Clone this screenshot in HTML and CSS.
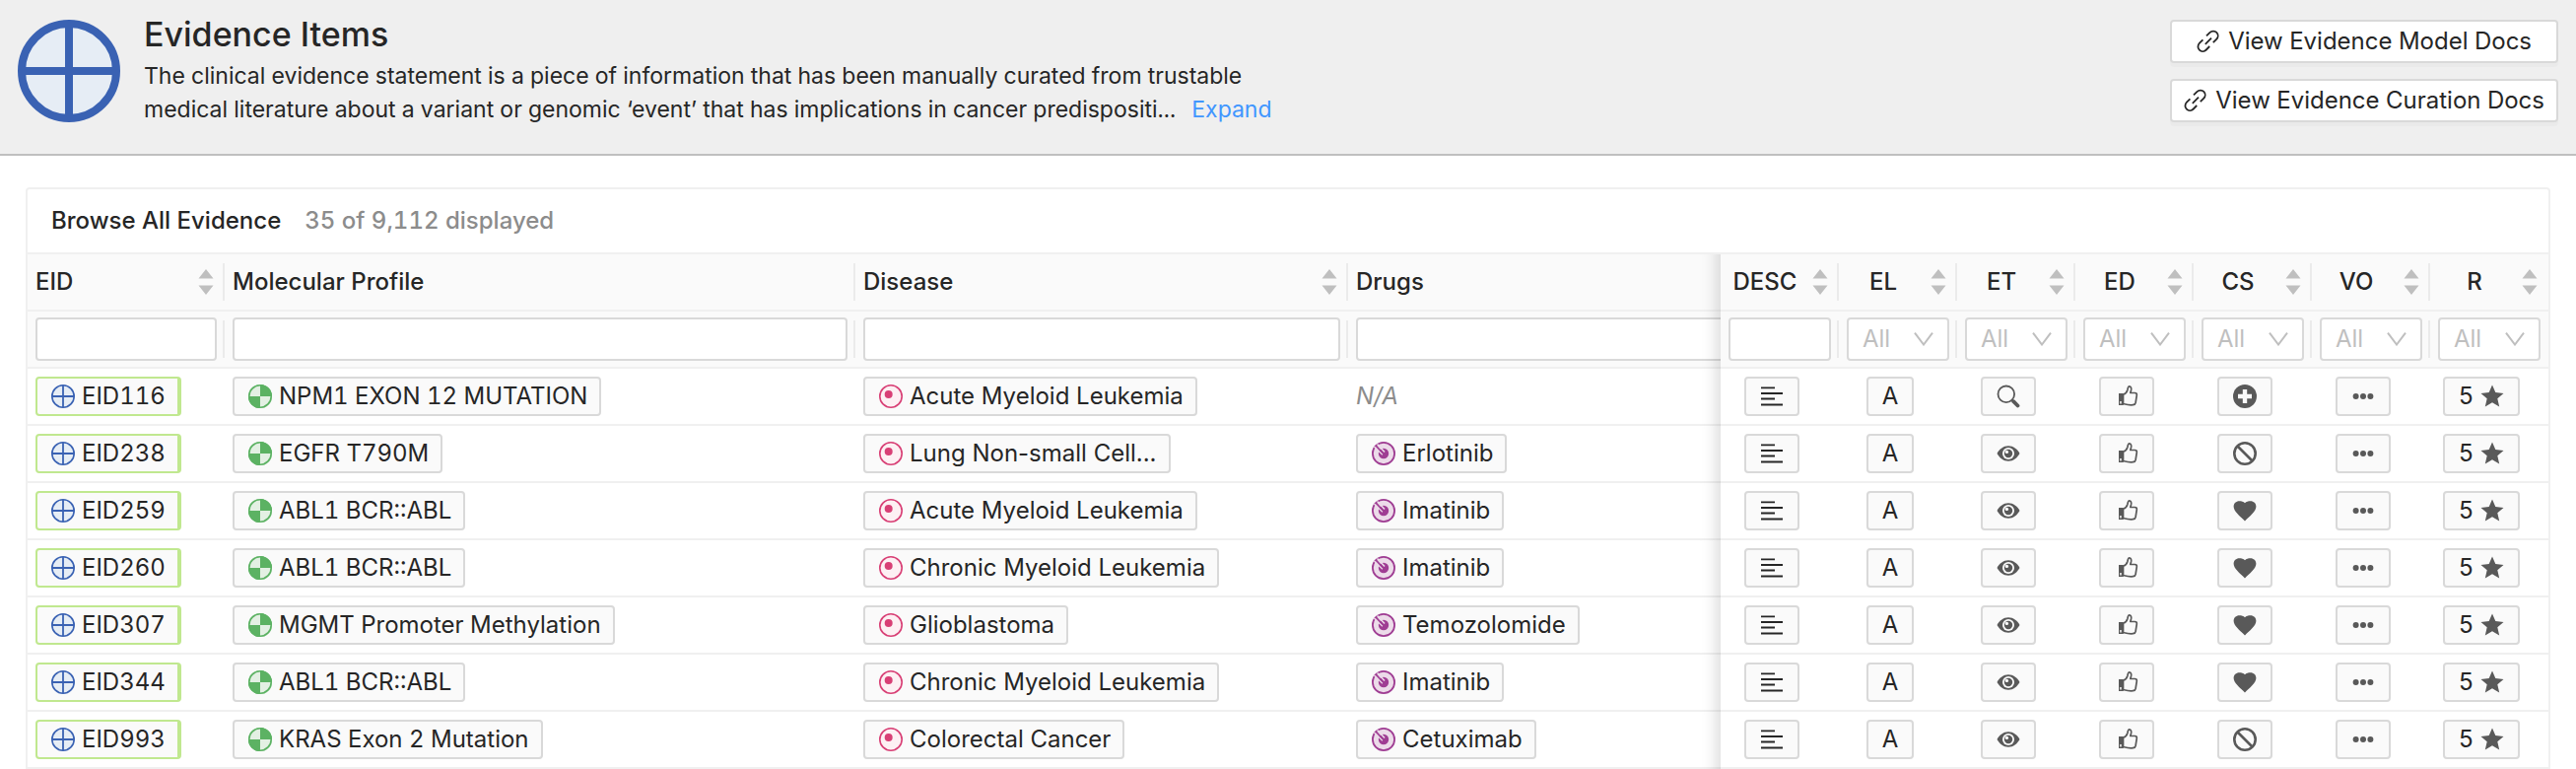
FILE: index.html
```html
<!DOCTYPE html>
<html lang="en">
<head>
<meta charset="utf-8">
<title>Evidence Items</title>
<link rel="stylesheet" href="styles.css">
</head>
<body>
<svg class="sprite" aria-hidden="true">
  <symbol id="i-link" viewBox="0 0 24 24"><path d="M10 6.400l3.300-3.300c2-2 5.200-2.100 7-.2 1.900 1.900 1.800 5-.2 7l-3.300 3.300M13.200 17l-3.400 3.500c-2 2-5.100 2.100-7 .2-1.900-1.900-1.800-5 .2-7l3.400-3.400M8.800 14.800l6.200-6.200" fill="none" stroke="#262626" stroke-width="1.800"/></symbol>
  <symbol id="i-evidence" viewBox="0 0 24 24"><circle cx="12" cy="12" r="11.200" fill="#e6edf5" stroke="#3a62b3" stroke-width="1.600"/><path d="M12 1v22M1 12h22" stroke="#3a62b3" stroke-width="1.800"/></symbol>
  <symbol id="i-profile" viewBox="0 0 24 24"><circle cx="12" cy="12" r="11.200" fill="#e3f0e3" stroke="#5cb263" stroke-width="1.600"/><path d="M12 12V0a12 12 0 0 1 12 12z" fill="#e3f0e3"/><path d="M12 0A12 12 0 0 0 0 12h12zM12 24a12 12 0 0 0 12-12H12z" fill="#e3f0e3"/><path d="M12 12V0a12 12 0 0 1 12 12zM12 12v12A12 12 0 0 1 0 12z" fill="#5cb263"/><circle cx="12" cy="12" r="11.200" fill="none" stroke="#5cb263" stroke-width="1.600"/></symbol>
  <symbol id="i-disease" viewBox="0 0 24 24"><circle cx="12" cy="12" r="11.200" fill="#fdf0f3" stroke="#d83f75" stroke-width="1.600"/><circle cx="9.700" cy="10" r="4" fill="#d83f75"/></symbol>
  <symbol id="i-drug" viewBox="0 0 24 24"><circle cx="12" cy="12" r="11.100" fill="#ecdbe9" stroke="#9f3d93" stroke-width="1.800"/><circle cx="12" cy="12" r="5.200" fill="#9f3d93"/><path d="M2.500 5L11 13.200M5.500 2.500l7.500 8" stroke="#ecdbe9" stroke-width="1.600"/><path d="M4 3.800l8 8.700" stroke="#9f3d93" stroke-width="1.700"/></symbol>
  <symbol id="i-lines" viewBox="0 0 24 24"><path d="M1 3.300h14M1 9h22M1 14.500h14M1 20.500h22" stroke="#262626" stroke-width="1.800"/></symbol>
  <symbol id="i-search" viewBox="0 0 24 24"><circle cx="9.800" cy="9.800" r="8.300" fill="none" stroke="#595959" stroke-width="1.800"/><path d="M15.800 15.800l2 2" stroke="#595959" stroke-width="2"/><path d="M17.200 17.200l4.300 4.300" stroke="#595959" stroke-width="3.800" stroke-linecap="round"/></symbol>
  <symbol id="i-eye" viewBox="0 0 24 24"><path d="M.5 12C3 7.500 7 4.300 12 4.300S21 7.500 23.500 12C21 16.500 17 19.700 12 19.700S3 16.500.5 12z" fill="#595959"/><circle cx="12" cy="12" r="6" fill="#fafafa"/><circle cx="12" cy="12" r="4.200" fill="#595959"/><circle cx="10.400" cy="10.400" r="1.700" fill="#fafafa"/></symbol>
  <symbol id="i-thumb" viewBox="0 0 24 24"><path d="M8.500 10.300c2.200-.9 3.900-2.800 4.400-4.800.4-2 .5-3.600 1.800-3.600 1.700 0 2.300 1.800 1.900 3.600l-.8 3h4.500c1.500 0 2.200 1 2 2.300l-1.200 7.700c-.3 1.500-1.100 2.100-2.600 2.200-4.500.4-5.500 0-10-1.200z" fill="none" stroke="#595959" stroke-width="1.700" stroke-linejoin="round"/><path d="M4 9h4.800v12H4z" fill="#595959"/><path d="M5.200 17h1.500v2.500H5.200z" fill="#fafafa"/></symbol>
  <symbol id="i-plus" viewBox="0 0 24 24"><circle cx="12" cy="12" r="12" fill="#595959"/><path d="M12 5v14M5 12h14" stroke="#fafafa" stroke-width="4.400"/></symbol>
  <symbol id="i-ban" viewBox="0 0 24 24"><circle cx="12" cy="12" r="10.700" fill="none" stroke="#595959" stroke-width="2.600"/><path d="M4.500 4.500l15 15" stroke="#595959" stroke-width="2.600"/></symbol>
  <symbol id="i-heart" viewBox="0 0 24 24"><path d="M12 22.500C7 17.500.6 12.800.6 7.800.6 4.400 3.200 2.200 6.200 2.200c2.400 0 4.400.6 5.800 2 1.400-1.400 3.400-2 5.800-2 3 0 5.600 2.200 5.600 5.600 0 5-6.400 9.700-11.400 14.700z" fill="#595959"/></symbol>
  <symbol id="i-dots" viewBox="0 0 24 24"><g fill="#595959"><circle cx="4.600" cy="12" r="3"/><circle cx="12" cy="12" r="3"/><circle cx="19.400" cy="12" r="3"/></g></symbol>
  <symbol id="i-star" viewBox="0 0 24 24"><path d="M12 .5l3.300 7.600 8.200.8-6.200 5.400 1.900 8.200L12 18.300l-7.200 4.200 1.900-8.200L.5 8.900l8.200-.8z" fill="#595959"/></symbol>
  <symbol id="i-sort" viewBox="0 0 22 26"><path d="M11 0l7.500 9.500h-15zM3.500 16.500h15L11 26z" fill="#bfbfbf"/></symbol>
  <symbol id="i-down" viewBox="0 0 20 14"><path d="M1 .7l9 11.800L19 .7" fill="none" stroke="#bfbfbf" stroke-width="2"/></symbol>
</svg>

<header class="page-header">
  <svg class="page-icon" viewBox="0 0 104 104" aria-hidden="true"><circle cx="52" cy="52" r="48" fill="#e6edf5" stroke="#3a62b3" stroke-width="8"/><path d="M52 4v96M4 52h96" stroke="#3a62b3" stroke-width="8"/></svg>
  <div class="page-intro">
    <h1>Evidence Items</h1>
    <p>The clinical evidence statement is a piece of information that has been manually curated from trustable<br>medical literature about a variant or genomic ‘event’ that has implications in cancer predispositi... <a class="expand" href="#">Expand</a></p>
  </div>
  <nav class="page-actions">
    <a class="btn" href="#"><svg><use href="#i-link"/></svg>View Evidence Model Docs</a>
    <a class="btn" href="#"><svg><use href="#i-link"/></svg>View Evidence Curation Docs</a>
  </nav>
</header>

<main class="card">
  <div class="card-head"><h2>Browse All Evidence</h2><span class="count">35 of 9,112 displayed</span></div>
  <div class="scroller">
    <table>
      <colgroup><col class="c-eid"><col class="c-profile"><col class="c-disease"><col><col class="c-s"><col class="c-s"><col class="c-s"><col class="c-s"><col class="c-s"><col class="c-s"><col class="c-s"></colgroup>
      <thead id="head"></thead>
      <tbody id="rows"></tbody>
    </table>
  </div>
</main>
<script src="table.js"></script>
</body>
</html>
```

FILE: table.js
```js
const icon = (name) => `<svg class="icon" aria-hidden="true"><use href="#i-${name}"/></svg>`;

const columns = [
  ["EID", true], ["Molecular Profile", false], ["Disease", true], ["Drugs", false],
  ["DESC", true], ["EL", true], ["ET", true], ["ED", true], ["CS", true], ["VO", true], ["R", true],
];

const rows = [
  ["EID116", "NPM1 EXON 12 MUTATION", "Acute Myeloid Leukemia", null, "search", "plus"],
  ["EID238", "EGFR T790M", "Lung Non-small Cell...", "Erlotinib", "eye", "ban"],
  ["EID259", "ABL1 BCR::ABL", "Acute Myeloid Leukemia", "Imatinib", "eye", "heart"],
  ["EID260", "ABL1 BCR::ABL", "Chronic Myeloid Leukemia", "Imatinib", "eye", "heart"],
  ["EID307", "MGMT Promoter Methylation", "Glioblastoma", "Temozolomide", "eye", "heart"],
  ["EID344", "ABL1 BCR::ABL", "Chronic Myeloid Leukemia", "Imatinib", "eye", "heart"],
  ["EID993", "KRAS Exon 2 Mutation", "Colorectal Cancer", "Cetuximab", "eye", "ban"],
];

const pin = (i) => (i > 3 ? ` pin pin-${i - 3}` : "");

const titles = columns.map(([name, sortable], i) =>
  `<th scope="col" class="rule${pin(i)}"><div class="th"><span class="th-text">${name}</span>` +
  (sortable ? `<button class="sort" aria-label="Sort by ${name}"><svg><use href="#i-sort"/></svg></button>` : "") +
  `</div></th>`).join("");

const filters = columns.map(([name], i) =>
  `<td class="rule${pin(i)}">` + (i < 5
    ? `<input class="field" type="text" aria-label="Filter ${name}">`
    : `<div class="select"><select class="field" aria-label="Filter ${name}"><option>All</option></select><svg><use href="#i-down"/></svg></div>`) +
  `</td>`).join("");

document.getElementById("head").innerHTML =
  `<tr class="titles">${titles}</tr><tr class="filters">${filters}</tr>`;

const tag = (name, text, extra = "") => `<a class="tag entity ${extra}" href="#">${icon(name)}${text}</a>`;

document.getElementById("rows").innerHTML = rows.map(([eid, profile, disease, drug, type, significance]) => {
  const marks = [icon("lines"), "A", icon(type), icon("thumb"), icon(significance), icon("dots"), `5${icon("star")}`];
  return `<tr><td>${tag("evidence", eid, "accepted")}</td><td>${tag("profile", profile)}</td>` +
    `<td class="words">${tag("disease", disease)}</td><td>${drug ? tag("drug", drug) : '<i class="none">N/A</i>'}</td>` +
    marks.map((m, i) => `<td class="mark pin pin-${i + 1}"><span class="tag">${m}</span></td>`).join("") + `</tr>`;
}).join("");
```

FILE: styles.css
```css
* { box-sizing: border-box; }

body {
  margin: 0;
  background: #fff;
  color: #262626;
  font: 24px/34px Inter, "Liberation Sans", sans-serif;
  font-variant-numeric: tabular-nums;
}

.sprite { display: none; }
a { color: inherit; text-decoration: none; }

.page-header {
  display: flex;
  gap: 24px;
  padding: 20px 18px 32px;
  background: #efefef;
  border-bottom: 2px solid #bfbfbf;
}
.page-icon { width: 104px; height: 104px; flex: none; }
.page-intro { flex: 1; }
.page-intro h1 { margin: -6px 0 4px; font-size: 34px; line-height: 42px; font-weight: 500; }
.page-intro p { margin: 0; height: 64px; font-size: 23px; }
.expand { margin-left: 10px; color: #4096ff; }

.page-actions { display: flex; flex-direction: column; gap: 16px; }
.btn {
  display: flex;
  align-items: center;
  justify-content: center;
  gap: 8px;
  height: 44px;
  padding: 0 12px;
  background: #fff;
  border: 2px solid #d9d9d9;
  border-radius: 4px;
  box-shadow: 0 4px 0 rgba(0, 0, 0, 0.02);
}
.btn svg { width: 24px; height: 24px; }

.card {
  margin: 32px 26px 0;
  border: 2px solid #f0f0f0;
  border-bottom: 0;
  border-radius: 4px 4px 0 0;
}
.card-head {
  display: flex;
  align-items: center;
  gap: 24px;
  height: 66px;
  padding: 0 24px;
  border-bottom: 2px solid #f0f0f0;
}
.card-head h2 { margin: 0; font-size: 24px; font-weight: 500; }
.count { color: #8c8c8c; font-weight: 500; }

.scroller { overflow-x: auto; scrollbar-width: none; }
table {
  width: 100%;
  min-width: 2680px;
  table-layout: fixed;
  border-collapse: separate;
  border-spacing: 0;
}
.c-eid { width: 200px; }
.c-profile { width: 640px; }
.c-disease { width: 500px; }
.c-s { width: 120px; }

th, td {
  position: relative;
  height: 58px;
  padding: 0 8px;
  text-align: left;
  vertical-align: middle;
  border-bottom: 2px solid #f0f0f0;
  background: #fff;
}
thead th, thead td { background: #fafafa; }
th { font-weight: 500; }

.rule:not(:last-child)::before {
  content: "";
  position: absolute;
  right: 0;
  top: 9px;
  width: 2px;
  height: 38px;
  background: #ebebeb;
}

.th { display: flex; align-items: center; gap: 8px; }
.th-text { flex: 1; }
.pin .th-text { text-align: center; }
.sort { display: flex; padding: 0; border: 0; background: none; }
.sort svg { width: 22px; height: 26px; }

.field {
  display: block;
  width: 100%;
  height: 44px;
  padding: 0 14px;
  background: #fff;
  border: 2px solid #d9d9d9;
  border-radius: 4px;
  color: #bfbfbf;
  font: inherit;
  appearance: none;
}
.select { display: grid; align-items: center; }
.select > * { grid-area: 1 / 1; }
.select svg {
  z-index: 1;
  justify-self: end;
  width: 20px;
  height: 14px;
  margin-right: 16px;
  pointer-events: none;
}

.pin { position: sticky; z-index: 2; }
.pin-1 { right: 720px; }
.pin-2 { right: 600px; }
.pin-3 { right: 480px; }
.pin-4 { right: 360px; }
.pin-5 { right: 240px; }
.pin-6 { right: 120px; }
.pin-7 { right: 0; }
.pin-1::after {
  content: "";
  position: absolute;
  top: 0;
  bottom: -2px;
  right: 100%;
  width: 60px;
  box-shadow: inset -20px 0 16px -16px rgba(0, 0, 0, 0.15);
  pointer-events: none;
}

.tag {
  display: inline-flex;
  align-items: center;
  gap: 7px;
  height: 40px;
  padding: 0 14px;
  background: #fafafa;
  border: 2px solid #d9d9d9;
  border-radius: 4px;
  white-space: nowrap;
  vertical-align: middle;
}
.entity { padding-right: 12px; }
.accepted { border-color: #c0e88f; border-right-width: 4px; }
.words { font-variant-numeric: normal; }
.icon { width: 24px; height: 24px; flex: none; }
.mark { text-align: center; }
.mark .tag { margin-right: 16px; }
.none { color: #8c8c8c; }
```
